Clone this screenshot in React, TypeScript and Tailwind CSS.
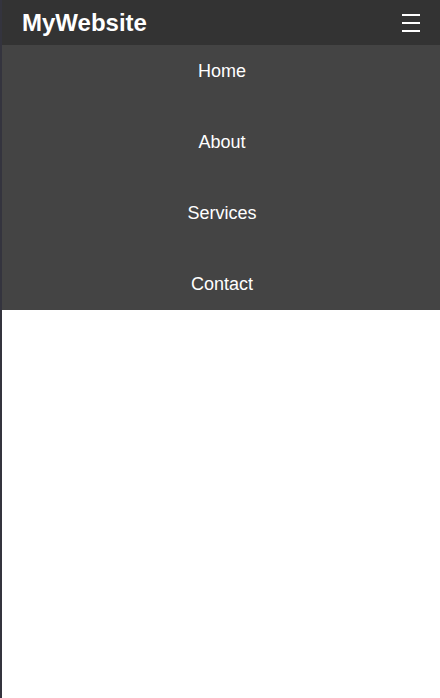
import React from "react";

export default function App() {
  const items = ["Home", "About", "Services", "Contact"];
  return (
    <div
      className="h-[698px] w-[440px] bg-white border-l-2 border-[#34343e]"
      style={{ fontFamily: '"Liberation Sans", Arial, sans-serif' }}
    >
      <header className="flex h-[45px] items-center justify-between bg-[#333333] pl-5 pr-[20px]">
        <span className="text-[24px] font-bold leading-none text-white">MyWebsite</span>
        <button className="flex flex-col gap-[6px]" aria-label="menu">
          <span className="block h-[2px] w-[18px] bg-white" />
          <span className="block h-[2px] w-[18px] bg-white" />
          <span className="block h-[2px] w-[18px] bg-white" />
        </button>
      </header>
      <nav className="flex h-[265px] flex-col gap-[19px] bg-[#444444] pl-[2px]">
        {items.map((t) => (
          <a key={t} className="flex h-[52px] items-center justify-center text-[18px] text-white">
            {t}
          </a>
        ))}
      </nav>
    </div>
  );
}
